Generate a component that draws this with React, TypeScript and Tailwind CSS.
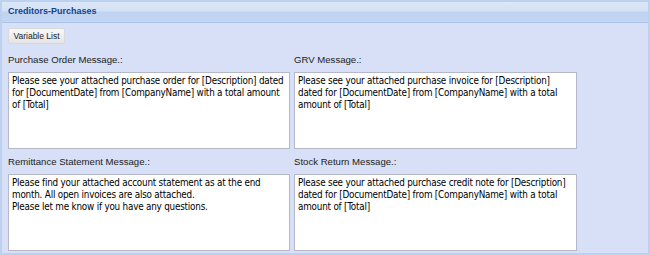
import React from 'react';

const messages = [
    {
        label: 'Purchase Order Message.:',
        text: 'Please see your attached purchase order for [Description] dated for [DocumentDate] from [CompanyName] with a total amount of [Total]',
    },
    {
        label: 'GRV Message.:',
        text: 'Please see your attached purchase invoice for [Description] dated for [DocumentDate] from [CompanyName] with a total amount of [Total]',
    },
    {
        label: 'Remittance Statement Message.:',
        text: 'Please find your attached account statement as at the end month. All open invoices are also attached.\nPlease let me know if you have any questions.',
    },
    {
        label: 'Stock Return Message.:',
        text: 'Please see your attached purchase credit note for [Description] dated for [DocumentDate] from [CompanyName] with a total amount of [Total]',
    },
];

export default function App() {
    return (
        <div className="w-[650px] h-[255px] bg-white font-['Liberation_Sans',Arial,sans-serif]">
            <div className="w-[650px] h-[255px] border-2 border-[#bcd0f0] bg-[#d7e0f7] flex flex-col">
                {/* panel header */}
                <div className="h-[21px] shrink-0 border-b border-[#a9c3ec] bg-[linear-gradient(to_bottom,#dce7f7_0%,#d3e1f6_45%,#bfd3f1_50%,#c3d6f2_100%)] flex items-center px-[6px]">
                    <span className="text-[9px] font-bold text-[#15428b]">Creditors-Purchases</span>
                </div>

                <div className="px-[6px] pt-[5px] flex flex-col items-start">
                    <button className="block h-[16px] w-[57px] rounded-[2px] border border-[#d9d9d9] bg-[linear-gradient(to_bottom,#f8f8f8,#e4e4e4)] text-[8.5px] text-[#222] leading-none">
                        Variable List
                    </button>

                    <div className="grid grid-cols-[282px_283px] gap-x-[4px] gap-y-[7px] mt-[10px]">
                        {messages.map((m) => (
                            <div key={m.label} className="flex flex-col">
                                <label className="block text-[9.6px] text-[#222] leading-[12px] mb-[6px]">{m.label}</label>
                                <textarea
                                    readOnly
                                    value={m.text}
                                    className="block h-[77px] w-full resize-none border border-[#b5b8c8] bg-white pl-[3px] pr-[2px] pt-[2px] pb-0 text-[9.8px] tracking-[-0.2px] leading-[12px] text-black outline-none overflow-hidden font-['DejaVu_Sans_Condensed','Liberation_Sans',sans-serif]"
                                />
                            </div>
                        ))}
                    </div>
                </div>
            </div>
        </div>
    );
}
